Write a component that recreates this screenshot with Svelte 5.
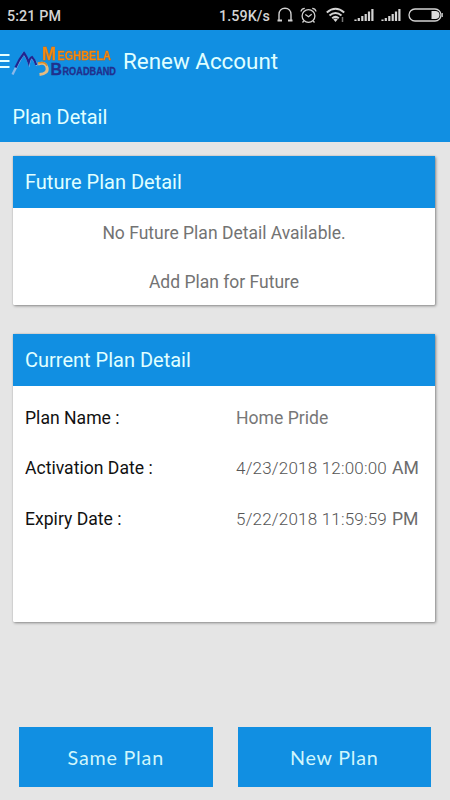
<script>
  const plan = [
    { label: 'Plan Name :', value: 'Home Pride' },
    { label: 'Activation Date :', date: '4/23/2018 12:00:00', period: 'AM' },
    { label: 'Expiry Date :', date: '5/22/2018 11:59:59', period: 'PM' }
  ];
</script>

{#snippet signal()}
  <svg class="signal" width="20" height="14" viewBox="0 0 20 14">
    <path d="M1.500 11.500v1.500M4.800 10v3M8.300 8v5M11.700 6v7M15 3.500V13M18.400 1v12" stroke="#d4d4d4" stroke-width="2.200" fill="none" />
  </svg>
{/snippet}

<div class="screen">
  <div class="status">
    <span class="time">5:21 PM</span>
    <span class="speed">1.59K/s</span>
    <svg class="headset" width="18" height="16" viewBox="0 0 18 16" fill="none" stroke="#d0d0d0">
      <path d="M3 14V7.500C3 3.800 5.400 1.300 9 1.300s6 2.500 6 6.200V14" stroke-width="1.400" />
      <path d="M1.500 13.500h4.500M12 13.500h4.500" stroke-width="2" />
    </svg>
    <svg class="alarm" width="17" height="17" viewBox="0 0 17 17" fill="none" stroke="#d0d0d0" stroke-width="1.300">
      <circle cx="8.500" cy="9" r="6.400" />
      <path d="M1 4.500Q1.500 1.500 4.800 1.300M12.200 1.300Q15.500 1.500 16 4.500M5.300 7.500l3.200 2.200 3.200-2.500M3.800 14l-1.300 1.500M13.200 14l1.300 1.500" />
    </svg>
    <svg class="wifi" width="20" height="16" viewBox="0 0 20 16" fill="none" stroke="#d4d4d4" stroke-width="2">
      <path d="M.8 5.500Q9.500-2 18.200 5.500M3.500 8.500Q9.500 3.500 15.500 8.500M6.200 11.300Q9.500 8.500 12.800 11.300" />
      <path d="M7.300 12.200Q9.500 10.800 11.700 12.200L9.500 15z" fill="#d4d4d4" stroke="none" />
      <path d="M16.500 10v5" stroke="#777" stroke-width="1.500" />
    </svg>
    {@render signal()}
    {@render signal()}
    <svg class="battery" width="36" height="14" viewBox="0 0 36 14">
      <rect x="1" y="1" width="32" height="12" rx="6" fill="none" stroke="#d4d4d4" stroke-width="1.300" />
      <path d="M23.500 3H28q3.500.5 3.500 4T28 11h-4.500z" fill="#ddd" />
      <path d="M34.200 5v4" stroke="#ccc" stroke-width="1.300" />
    </svg>
  </div>

  <header>
    <svg class="logo" width="120" height="40" viewBox="0 0 120 40">
      <path d="M0 14h9.500M0 20h9.500M0 26h9.500" stroke="#e4ffff" stroke-width="2" />
      <path d="M12.500 33.500Q17 24 23.500 12.500Q27 16 29 22Q30 17 32 16.500Q35 20 37 24.500" fill="none" stroke="#8bb8e8" stroke-width="2.300" />
      <path d="M15.500 26.500Q19 18.500 24 12Q27 16 28.700 21.500Q30 16.500 32 16Q34.500 18.500 36.300 24" fill="none" stroke="#20258f" stroke-width="2.200" />
      <path d="M38 23q7.500-2.500 9 3.500t-7.500 7" fill="none" stroke="#e3bb82" stroke-width="3" />
      <path d="M38.200 22.200q7-2.200 8.600 2.500" fill="none" stroke="#d88a25" stroke-width="1.300" />
      <g class="orange">
        <text x="42" y="18.800" font-size="18.500" textLength="14" lengthAdjust="spacingAndGlyphs">M</text>
        <text x="57.500" y="18.800" font-size="12.200" textLength="53.500" lengthAdjust="spacingAndGlyphs">EGHBELA</text>
      </g>
      <g class="navy">
        <text x="50.500" y="33.900" font-size="16" textLength="11.500" lengthAdjust="spacingAndGlyphs">B</text>
        <text x="62.500" y="33.900" font-size="10.500" textLength="53.500" lengthAdjust="spacingAndGlyphs">ROADBAND</text>
      </g>
    </svg>
    <h1>Renew Account</h1>
  </header>
  <div class="subhead">Plan Detail</div>

  <main>
    <section class="future">
      <h2>Future Plan Detail</h2>
      <p>No Future Plan Detail Available.</p>
      <p>Add Plan for Future</p>
    </section>
    <section class="current">
      <h2>Current Plan Detail</h2>
      {#each plan as row}
        <div class="row">
          <span class="label">{row.label}</span>
          {#if row.date}
            <span class="date">{row.date}</span>
            <span class="period">{row.period}</span>
          {:else}
            <span class="value">{row.value}</span>
          {/if}
        </div>
      {/each}
    </section>
  </main>

  <footer>
    <button>Same Plan</button>
    <button>New Plan</button>
  </footer>
</div>

<style>
  :global(body) { margin: 0; }
  .screen {
    width: 450px; height: 800px; overflow: hidden; background: #e5e5e5;
    display: flex; flex-direction: column;
    font-family: Roboto, "Liberation Sans", sans-serif;
  }
  .status {
    height: 30px; flex: none; background: #000; color: #d4d4d4;
    display: flex; align-items: center; box-sizing: border-box; padding: 0 6px 0 7px;
    font-size: 14.300px; font-weight: 500;
  }
  .time { margin-right: auto; letter-spacing: 0.100px; }
  .speed { margin-right: 6px; letter-spacing: 0.100px; }
  .time, .speed { padding-top: 1px; }
  .headset { margin-right: 6px; }
  .alarm { margin-right: 9px; }
  .wifi { margin-right: 8px; }
  .signal { margin-right: 7px; }
  svg { display: block; flex: none; }
  header { height: 61px; flex: none; background: #118fe2; display: flex; align-items: center; }
  .logo { overflow: visible; }
  .logo text { font-family: "Liberation Sans", Arial, sans-serif; font-weight: bold; }
  .orange { fill: #f18a16; stroke: #f18a16; stroke-width: .3px; filter: drop-shadow(.8px .8px .3px #6b4a35); }
  .navy { fill: #20308d; stroke: #20308d; stroke-width: .3px; }
  h1 { margin: 0 0 0 3px; font-size: 22.400px; font-weight: 400; color: #e0ffff; white-space: nowrap; }
  .subhead {
    height: 51px; flex: none; box-sizing: border-box; padding: 1px 0 0 12.500px; line-height: 51px;
    background: #118fe2; color: #e0ffff; font-size: 19.900px;
  }
  main { flex: 1; padding: 14px 15px 0 13px; display: flex; flex-direction: column; gap: 29px; }
  section { background: #fff; border-radius: 1px; box-shadow: 1px 1px 3px rgba(0, 0, 0, .4), 0 0 1px rgba(0, 0, 0, .3); }
  .future { height: 149px; }
  .current { height: 288px; }
  h2 {
    height: 52px; line-height: 53px; margin: 0; padding-left: 12px; background: #118fe2;
    color: #e0ffff; font-size: 20px; font-weight: 400;
  }
  p { margin: 0; text-align: center; color: #737373; font-size: 17.500px; line-height: 49px; position: relative; top: 1px; }
  .row { display: flex; height: 50.500px; align-items: center; padding-left: 12px; font-size: 17.600px; white-space: nowrap; }
  h2 + .row { margin-top: 6.500px; }
  .label { width: 211px; color: #111; }
  .value { color: #777; }
  .date { width: 156px; font-size: 17px; font-weight: 300; letter-spacing: .200px; color: #555; }
  .period { color: #6c6c6c; }
  footer { display: flex; gap: 25px; padding: 0 19px 13px; }
  button {
    flex: 1; height: 60px; border: 0; padding: 0; background: #118fe2; color: #d0f6fc;
    font: 400 19.700px "Century Gothic", Lato, sans-serif; letter-spacing: .8px;
  }
</style>
